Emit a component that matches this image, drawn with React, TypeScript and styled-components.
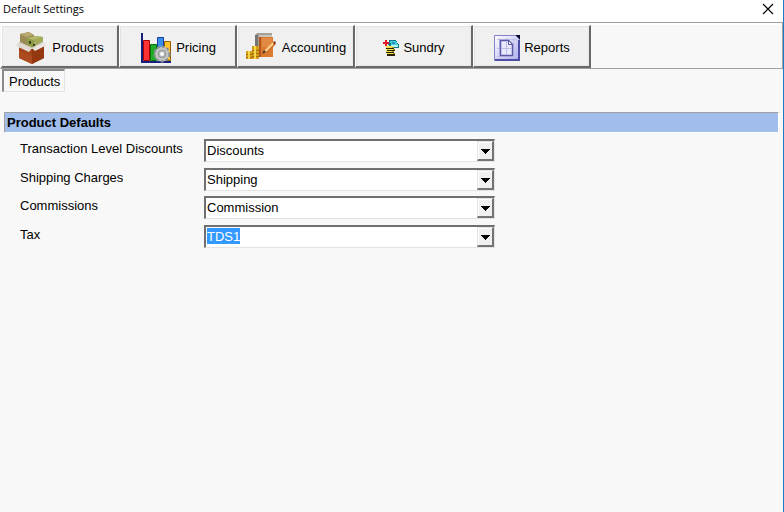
import React from "react";
import styled, { createGlobalStyle, css } from "styled-components";

const GlobalStyle = createGlobalStyle`
  * { box-sizing: border-box; }
  html, body, #root { height: 100%; margin: 0; }
  body, button, select { font-family: "Liberation Sans", Arial, sans-serif; font-size: 13px; color: #000; }
`;

const Window = styled.main`
  display: flex;
  flex-direction: column;
  min-height: 100%;
  background: #f8f8f8;
  border-right: 1px solid #1e7bc4;
`;

const TitleBar = styled.header`
  display: flex;
  align-items: center;
  justify-content: space-between;
  height: 22px;
  padding: 0 9px 4px 3px;
  background: #fff;
`;

const Title = styled.h1`
  margin: 0;
  font: 400 11px/18px "Open Sans", "Noto Sans", sans-serif;
`;

const CloseButton = styled.button`
  display: flex;
  padding: 0;
  border: 0;
  background: none;
`;

const Toolbar = styled.nav`
  display: flex;
  height: 47px;
  border: solid #a0a0a0;
  border-width: 1px 1px 1px 0;
  box-shadow: inset 0 2px #fff;
  padding: 2px 0 0 1px;
`;

const ToolButton = styled.button`
  display: flex;
  flex: 0 0 118px;
  align-items: center;
  justify-content: center;
  gap: 4px;
  height: 43px;
  padding: 3px 0 0 1px;
  border: solid;
  border-width: 1px 2px 2px 1px;
  border-color: #fff #696969 #696969 #fff;
  background: #f0f0f0;
  box-shadow: inset 1px 1px #e3e3e3, inset -1px -1px #e8e8e8;
  line-height: 16px;
  svg { flex: none; }
`;

const SubTabs = styled.nav`
  display: flex;
  padding-left: 2px;
`;

const SubTab = styled.button`
  height: 23px;
  padding: 1px 4px 0 5px;
  border: solid;
  border-width: 2px 1px 1px 2px;
  border-color: #8a8a8a #e3e3e3 #e3e3e3 #8a8a8a;
  background: repeating-conic-gradient(#f0f0f0 0 25%, #fff 0 50%) 0 0 / 2px 2px;
  line-height: 16px;
`;

const Panel = styled.section`
  padding: 20px 4px;
`;

const PanelTitle = styled.h2`
  height: 21px;
  margin: 0;
  padding: 0 2px;
  border: 1px solid;
  border-color: #a0a0a0 #fff #fff #a0a0a0;
  background: #a0bdec;
  font-size: 13px;
  line-height: 19px;
`;

const Fields = styled.form`
  display: grid;
  grid-template-columns: 184px minmax(0, 291px);
  grid-template-rows: 29px 28px 29px 23px;
  padding: 6px 16px;
`;

const Label = styled.label`
  padding-top: 2px;
  line-height: 16px;
`;

const ComboBox = styled.div`
  display: grid;
  grid-template-columns: minmax(0, 1fr) 17px;
  height: 23px;
  border: solid;
  border-width: 2px 1px 1px 2px;
  border-color: #707070 #e3e3e3 #e3e3e3 #707070;
  background: #fff;
`;

const Select = styled.select<{ $highlighted: boolean }>`
  grid-area: 1 / 1 / 2 / 3;
  min-width: 0;
  padding: 0 20px 1px 1px;
  border: 0;
  border-radius: 0;
  outline: 0;
  appearance: none;
  background: transparent;
  line-height: 16px;
  ${({ $highlighted }) =>
    $highlighted &&
    css`
      color: #fff;
      background: linear-gradient(#3399ff, #3399ff) 1px 1px / 33px 16px no-repeat;
      option { color: #000; }
    `}
`;

const DropArrow = styled.span`
  display: flex;
  grid-area: 1 / 2;
  align-items: center;
  justify-content: center;
  padding-top: 2px;
  border: solid;
  border-width: 1px 2px 2px 1px;
  border-color: #e3e3e3 #747474 #747474 #e3e3e3;
  background: #f0f0f0;
  box-shadow: inset 1px 1px #fff;
  pointer-events: none;
`;

function BoxIcon() {
  return (
    <svg width="32" height="32" viewBox="0 0 32 32" aria-hidden="true">
      <path d="M3 14l13 3 12-4v13l-12 6-13-6z" fill="#a3441a" />
      <path d="M16 17l12-4v13l-12 6z" fill="#94380f" />
      <path d="M3 19l13 5v8L3 26z" fill="#ad4b20" />
      <path d="M4 2l9-2 5 3v10l-8 2-6-4z" fill="#9a8a54" />
      <path d="M4 2l9-2 5 3-8 2z" fill="#b8a873" />
      <path d="M11 6l9-2 7 1v8l-10 4-6-4z" fill="#8f9c46" />
      <path d="M11 6l9-2 7 1-9 3z" fill="#b2b86c" />
      <path d="M18 8l9-3v8l-9 3z" fill="#a3aa5b" />
      <path d="M13 9h2v3h-2zM17 12h2v2h-2z" fill="#37451f" />
      <path d="M3 10l13 6-3 4-13-6z" fill="#e0dad2" />
      <path d="M16 16l11-6 4 3-12 6z" fill="#eae5de" />
      <path d="M3 10l13 6 11-6" fill="none" stroke="#cfc6ba" />
    </svg>
  );
}

function ChartIcon() {
  return (
    <svg width="32" height="32" viewBox="0 0 32 32" aria-hidden="true">
      <path d="M2 1v29h29" fill="none" stroke="#12217e" strokeWidth="2" />
      <path d="M3.500 8.500h6v20h-6z" fill="#f33" stroke="#a90000" />
      <path d="M10.500 12.500h6v16h-6z" fill="#20ac27" stroke="#057709" />
      <path d="M17.500 5.500h6v23h-6z" fill="#398ee9" stroke="#13409c" />
      <path d="M24.500 9.500h6v19h-6z" fill="#ffc42e" stroke="#9b5d00" />
      <circle cx="22" cy="22" r="7.500" fill="#bfc1c2" stroke="#8a8e90" strokeWidth="2" strokeDasharray="3 2" />
      <circle cx="22" cy="22" r="6" fill="#c6c7c6" />
      <circle cx="22" cy="22" r="4" fill="#b0b3b4" stroke="#999c9e" />
      <circle cx="22" cy="22" r="2" fill="#fff" />
    </svg>
  );
}

function LedgerIcon() {
  return (
    <svg width="32" height="32" viewBox="0 0 32 32" aria-hidden="true">
      <path d="M9 3l2-2h15v22H9z" fill="#a5a198" />
      <path d="M9 3h3v19H9z" fill="#77756f" />
      <path d="M13 3h13v2H13z" fill="#c9c5bc" />
      <path d="M13 5h14v20H13z" fill="#dc7a30" />
      <path d="M13 5h2v20h-2z" fill="#b3581d" />
      <path d="M16 6h10v9H16z" fill="#e28a44" />
      <path d="M18 20l9-9 3 1-9 9z" fill="#c76d22" />
      <path d="M18 19l9-9 2 1-9 9z" fill="#ffd08b" />
      <path d="M27 10l2-1 1 2-2 2z" fill="#963919" />
      <path d="M16 22l2-4 2 2z" fill="#4a321c" />
      <path d="M6 14h7v13H6zM0 19h7v8H0z" fill="#d39d18" />
      <path d="M6 18h7v1H6zM6 21h7v1H6zM6 24h7v1H6zM0 22h7v1H0zM0 25h7v1H0z" fill="#a3700c" />
      <path d="M8 14h2v13H8zM2 19h2v8H2z" fill="#f5d54c" />
    </svg>
  );
}

function SundryIcon() {
  return (
    <svg width="16" height="16" viewBox="0 0 16 16" aria-hidden="true" shapeRendering="crispEdges">
      <path d="M6 0h7l3 5v3h-8L5 4z" fill="#087a86" />
      <path d="M7 1h6l2 4H8z" fill="#45cdd9" />
      <path d="M9 2h3v2H9z" fill="#2b8ed0" />
      <path d="M8 5h7v2H8z" fill="#b8f4ee" />
      <path d="M3 6h6v1h2v9H4v-4H3z" fill="#f4e04f" />
      <path d="M3 8h8v1H3zM4 10h8v1H4zM3 12h8v1H3zM4 14h8v2H4z" fill="#2a2407" />
      <path d="M9 7h2v1H9zM10 9h2v1h-2zM9 11h2v1H9zM10 13h2v1h-2z" fill="#b09214" />
      <path d="M2 0h2v2h2v2H4v2H2V4H0V2h2z" fill="#e51622" />
    </svg>
  );
}

function ReportIcon() {
  return (
    <svg width="26" height="26" viewBox="0 0 26 26" aria-hidden="true">
      <defs>
        <linearGradient id="report" x1="0" y1="0" x2="1" y2="1">
          <stop stopColor="#fff" />
          <stop offset="1" stopColor="#aaaaf0" />
        </linearGradient>
      </defs>
      <path d="M21 0h5v6z" fill="#07072e" />
      <path d="M.500.500h21l4 4v21H.500z" fill="url(#report)" stroke="#8383ca" />
      <path d="M25 5v20H1" fill="none" stroke="#4d4da6" strokeWidth="2" />
      <path d="M3 4.500h20M3 13.500h20M3 21.500h20M5.500 3v20M12.500 3v20M19.500 3v20" stroke="#c4c4ea" />
      <path d="M6.500 5.500h8l4 4v11h-12z" fill="#e8e8ff" stroke="#5959a7" strokeWidth="1.500" />
      <path d="M14.500 5.500v4h4z" fill="#fff" stroke="#5959a7" />
      <path d="M7 13.500h11M12.500 6v14" stroke="#bcbce6" />
    </svg>
  );
}

const sections = [
  { name: "Products", Icon: BoxIcon },
  { name: "Pricing", Icon: ChartIcon },
  { name: "Accounting", Icon: LedgerIcon },
  { name: "Sundry", Icon: SundryIcon },
  { name: "Reports", Icon: ReportIcon },
];

const fields = [
  { id: "discounts", label: "Transaction Level Discounts", value: "Discounts" },
  { id: "shipping", label: "Shipping Charges", value: "Shipping" },
  { id: "commissions", label: "Commissions", value: "Commission" },
  { id: "tax", label: "Tax", value: "TDS1", highlighted: true },
];

export default function App() {
  return (
    <>
      <GlobalStyle />
      <Window>
        <TitleBar>
          <Title>Default Settings</Title>
          <CloseButton type="button" aria-label="Close">
            <svg width="12" height="12" viewBox="0 0 12 12" aria-hidden="true">
              <path d="M1 1l10 10M11 1L1 11" stroke="#000" strokeWidth="1.200" />
            </svg>
          </CloseButton>
        </TitleBar>
        <Toolbar aria-label="Sections">
          {sections.map(({ name, Icon }) => (
            <ToolButton type="button" key={name}>
              <Icon />
              {name}
            </ToolButton>
          ))}
        </Toolbar>
        <SubTabs aria-label="Pages">
          <SubTab type="button" aria-pressed="true">Products</SubTab>
        </SubTabs>
        <Panel>
          <PanelTitle>Product Defaults</PanelTitle>
          <Fields>
            {fields.map(({ id, label, value, highlighted }) => (
              <React.Fragment key={id}>
                <Label htmlFor={id}>{label}</Label>
                <ComboBox>
                  <Select id={id} defaultValue={value} $highlighted={Boolean(highlighted)}>
                    <option>{value}</option>
                  </Select>
                  <DropArrow>
                    <svg width="9" height="5" viewBox="0 0 9 5" aria-hidden="true" shapeRendering="crispEdges">
                      <path d="M0 0h9L4.500 5z" />
                    </svg>
                  </DropArrow>
                </ComboBox>
              </React.Fragment>
            ))}
          </Fields>
        </Panel>
      </Window>
    </>
  );
}
